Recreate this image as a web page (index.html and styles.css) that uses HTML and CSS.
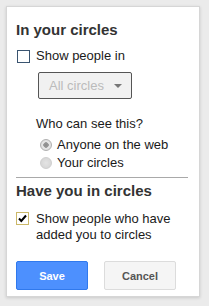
FILE: index.html
```html
<!DOCTYPE html>
<html lang="en">
<head>
    <meta charset="UTF-8">
    <title>Circles settings</title>
    <link rel="stylesheet" href="styles.css">
</head>
<body>
    <div class="card">
        <h3 class="section-title">In your circles</h3>
        <div class="check-row first-check">
            <span class="box"></span>
            <span class="label">Show people in</span>
        </div>
        <div class="dropdown">
            <span>All circles</span>
            <span class="arrow"></span>
        </div>
        <p class="who">Who can see this?</p>
        <div class="radios">
            <div class="radio-row">
                <span class="radio selected"></span>
                <span>Anyone on the web</span>
            </div>
            <div class="radio-row">
                <span class="radio"></span>
                <span>Your circles</span>
            </div>
        </div>
        <hr class="divider">
        <h3 class="section-title second">Have you in circles</h3>
        <div class="check-row second-check">
            <span class="box checked">
                <svg width="11" height="11" viewBox="0 0 11 11"><path d="M2 5.5 L4.3 8 L9 2.5" fill="none" stroke="#000" stroke-width="2"/></svg>
            </span>
            <span class="label">Show people who have added you to circles</span>
        </div>
        <div class="buttons">
            <button class="btn save">Save</button>
            <button class="btn cancel">Cancel</button>
        </div>
    </div>
</body>
</html>
```

FILE: styles.css
```css
body, html {
    margin: 0;
    padding: 0;
}
body {
    background-color: #ebebeb;
    padding: 6px;
    font-family: "Liberation Sans", Arial, sans-serif;
    font-size: 13px;
    color: #1a1a1a;
}
.card {
    background-color: white;
    border: 1px solid #d6d6d6;
    box-shadow: 0 1px 3px rgba(0, 0, 0, 0.15);
    width: 194px;
    height: 291px;
    box-sizing: border-box;
    padding: 14px 10px 0 9px;
}
.section-title {
    margin: 0;
    font-size: 15px;
    line-height: 18px;
    font-weight: bold;
    color: #333;
}
.section-title.second {
    margin-top: 4px;
}
/* Casillas */
.check-row {
    display: flex;
    align-items: flex-start;
    line-height: 16px;
}
.first-check {
    margin-top: 9px;
}
.second-check {
    margin-top: 11px;
}
.box {
    flex: none;
    width: 13px;
    height: 13px;
    box-sizing: border-box;
    border: 1px solid #3a5470;
    margin: 2px 6px 0 1px;
    display: flex;
    align-items: center;
    justify-content: center;
}
.box.checked {
    border-color: #cbb868;
    margin: 1px 7px 0 0;
}
/* Desplegable */
.dropdown {
    margin: 8px 0 0 22px;
    width: 94px;
    height: 27px;
    box-sizing: border-box;
    border: 1px solid #555;
    border-radius: 2px;
    background-color: #f1f1f1;
    color: #bbb;
    display: flex;
    align-items: center;
    padding-left: 10px;
}
.arrow {
    margin-left: 10px;
    width: 0;
    height: 0;
    border-left: 4px solid transparent;
    border-right: 4px solid transparent;
    border-top: 4px solid #777;
}
.who {
    margin: 17px 0 0 20px;
    line-height: 16px;
}
/* Botones de opcion */
.radios {
    margin: 4px 0 0 24px;
}
.radio-row {
    display: flex;
    align-items: center;
    line-height: 18px;
}
.radio {
    width: 12px;
    height: 12px;
    border-radius: 50%;
    margin-right: 5px;
    box-sizing: border-box;
    border: 1px solid #cfcfcf;
    background: radial-gradient(circle, #e4e4e4 0, #d8d8d8 70%);
}
.radio.selected {
    border-color: #b0b0b0;
    background: radial-gradient(circle, #8a8a8a 0, #9a9a9a 2.5px, #e8e8e8 3px, #d6d6d6 100%);
}
.divider {
    margin: 5px 1px 0 0;
    border: none;
    border-top: 1px solid #a9a9a9;
}
/* Botones */
.buttons {
    display: flex;
    gap: 16px;
    margin-top: 18px;
}
.btn {
    width: 72px;
    height: 29px;
    border-radius: 2px;
    font-family: "Liberation Sans", Arial, sans-serif;
    font-size: 11px;
    font-weight: bold;
    padding: 0;
}
.save {
    background-color: #4d90fe;
    border: 1px solid #3079ed;
    color: white;
}
.cancel {
    background-color: #f5f5f5;
    border: 1px solid #dcdcdc;
    color: #555;
}
```
